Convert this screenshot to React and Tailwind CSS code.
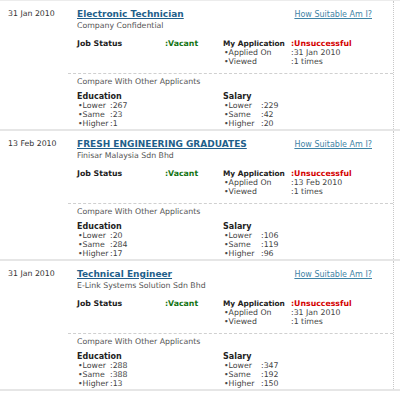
import React from 'react';

const jobs = [
  {
    date: '31 Jan 2010',
    title: 'Electronic Technician',
    company: 'Company Confidential',
    applied: '31 Jan 2010',
    viewed: '1 times',
    edu: ['267', '23', '1'],
    sal: ['229', '42', '20'],
  },
  {
    date: '13 Feb 2010',
    title: 'FRESH ENGINEERING GRADUATES',
    company: 'Finisar Malaysia Sdn Bhd',
    applied: '13 Feb 2010',
    viewed: '1 times',
    edu: ['20', '284', '17'],
    sal: ['106', '119', '96'],
  },
  {
    date: '31 Jan 2010',
    title: 'Technical Engineer',
    company: 'E-Link Systems Solution Sdn Bhd',
    applied: '31 Jan 2010',
    viewed: '1 times',
    edu: ['288', '388', '13'],
    sal: ['347', '192', '150'],
  },
];

const Row = ({ label, value, width }) => (
  <div className="flex h-[9px] items-center">
    <span className={width}>•{label}</span>
    <span>:{value}</span>
  </div>
);

const JobEntry = ({ job }) => (
  <div className="flex h-[130px] border-b-2 border-[#e6e6e6] text-[7.8px] leading-[9px] text-[#444]">
    <div className="w-[68px] shrink-0 pl-[8px] pt-[8px] text-[#333]">{job.date}</div>
    <div className="flex w-[326px] flex-col border-r border-dotted border-[#c8c8c8]">
      <div className="pl-[9px] pb-[7px]">
        <div className="mt-[8px] flex h-[11px] items-center justify-between pr-[21px]">
          <a className="text-[9px] font-bold text-[#1f5f8b] underline">{job.title}</a>
          <a className="text-[8px] text-[#3f84a6] underline">How Suitable Am I?</a>
        </div>
        <div className="mt-[1px] text-[#555]">{job.company}</div>
        <div className="mt-[9px] flex">
          <div className="flex h-[9px] w-[146px] items-center">
            <span className="w-[88px] font-bold text-[#222]">Job Status</span>
            <span className="font-bold text-[#137413]">:Vacant</span>
          </div>
          <div className="flex flex-col">
            <div className="flex h-[9px] items-center">
              <span className="w-[68px] text-[7.4px] font-bold text-[#222]">My Application</span>
              <span className="font-bold text-[#d40000]">:Unsuccessful</span>
            </div>
            <Row label="Applied On" value={job.applied} width="w-[68px] pl-[1px]" />
            <Row label="Viewed" value={job.viewed} width="w-[68px] pl-[1px]" />
          </div>
        </div>
      </div>
      <div className="border-t border-dashed border-[#d0d0d0] pl-[9px] pt-[3px]">
        <div className="text-[#555]">Compare With Other Applicants</div>
        <div className="mt-[6px] flex">
          <div className="w-[146px]">
            <div className="h-[9px] text-[8px] font-bold leading-[9px] text-[#222]">Education</div>
            <Row label="Lower" value={job.edu[0]} width="w-[33px] pl-[1px]" />
            <Row label="Same" value={job.edu[1]} width="w-[33px] pl-[1px]" />
            <Row label="Higher" value={job.edu[2]} width="w-[33px] pl-[1px]" />
          </div>
          <div>
            <div className="h-[9px] text-[8px] font-bold leading-[9px] text-[#222]">Salary</div>
            <Row label="Lower" value={job.sal[0]} width="w-[38px] pl-[1px]" />
            <Row label="Same" value={job.sal[1]} width="w-[38px] pl-[1px]" />
            <Row label="Higher" value={job.sal[2]} width="w-[38px] pl-[1px]" />
          </div>
        </div>
      </div>
    </div>
  </div>
);

export default function App() {
  return (
    <div className="h-[398px] w-[400px] bg-white" style={{ fontFamily: '"DejaVu Sans", Verdana, sans-serif' }}>
      <div className="border-t border-[#ececec]">
        {jobs.map((job, i) => (
          <JobEntry key={i} job={job} />
        ))}
      </div>
    </div>
  );
}
